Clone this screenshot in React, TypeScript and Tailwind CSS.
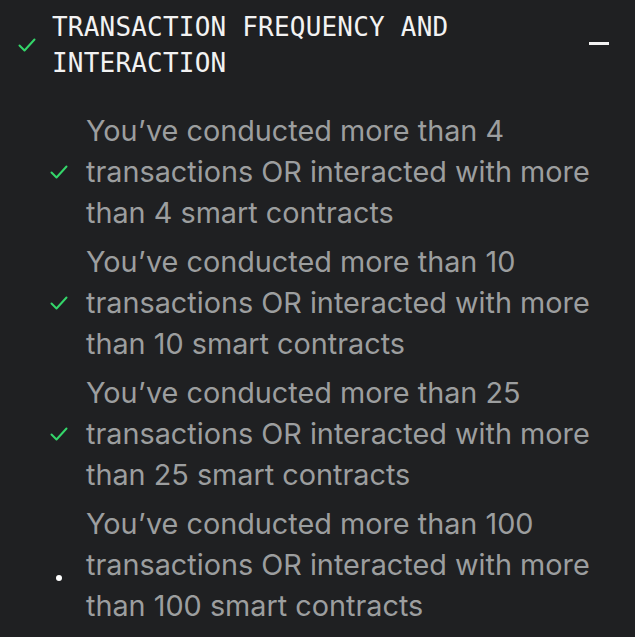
const items = [
  { lines: ["You’ve conducted more than 4", "transactions OR interacted with more", "than 4 smart contracts"], done: true },
  { lines: ["You’ve conducted more than 10", "transactions OR interacted with more", "than 10 smart contracts"], done: true },
  { lines: ["You’ve conducted more than 25", "transactions OR interacted with more", "than 25 smart contracts"], done: true },
  { lines: ["You’ve conducted more than 100", "transactions OR interacted with more", "than 100 smart contracts"], done: false },
];

function Check({ className = "" }: { className?: string }) {
  return (
    <svg viewBox="0 0 18 14" className={className} fill="none">
      <path d="M1.5 7.5 L6.5 12.5 L16.5 1.5" stroke="#34d66a" strokeWidth="2" strokeLinecap="round" strokeLinejoin="round" />
    </svg>
  );
}

export default function App() {
  return (
    <div className="w-[635px] h-[637px] bg-[#1f2022] overflow-hidden">
      {/* Header */}
      <div className="flex items-center pt-[9px] pl-[18px] pr-[26px]">
        <Check className="w-[18px] h-[14px] shrink-0" />
        <div
          className="ml-[16px] flex-1 text-[26px] leading-[36px] text-[#f2f2f2] tracking-[0.2px]"
          style={{ fontFamily: '"DejaVu Sans Mono", monospace' }}
        >
          TRANSACTION FREQUENCY AND
          <br />
          INTERACTION
        </div>
        <div className="w-[20px] h-[3px] bg-[#f2f2f2] self-start mt-[33px]" />
      </div>

      {/* Criteria */}
      <div className="flex flex-col gap-[8px] pt-[29px] pl-[50px]">
        {items.map((item, i) => (
          <div key={i} className="flex items-center">
            <div className="w-[18px] flex justify-center shrink-0">
              {item.done ? (
                <Check className="w-[18px] h-[14px]" />
              ) : (
                <div className="w-[6px] h-[6px] rounded-full bg-white mt-[26px]" />
              )}
            </div>
            <div
              className="ml-[18px] text-[28.8px] leading-[41px] text-[#9c9e9f]"
              style={{ fontFamily: 'Inter, sans-serif' }}
            >
              {item.lines.map((l, j) => (
                <div key={j} className="whitespace-nowrap">{l}</div>
              ))}
            </div>
          </div>
        ))}
      </div>
    </div>
  );
}
